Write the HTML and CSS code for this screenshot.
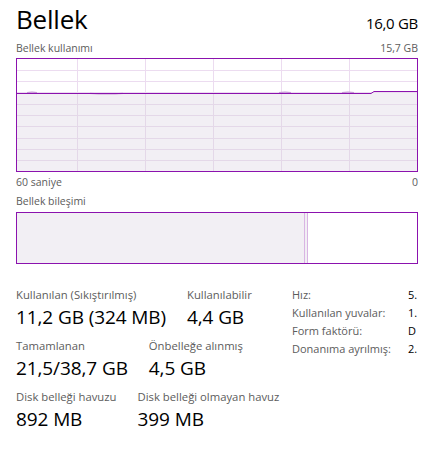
FILE: index.html
```html
<!DOCTYPE html>
<html lang="tr">
<head>
<meta charset="utf-8">
<link rel="stylesheet" href="styles.css">
</head>
<body>
<div class="page">
  <div class="head">
    <div class="title">Bellek</div>
    <div class="total">16,0 GB</div>
  </div>
  <div class="sub">
    <span>Bellek kullanımı</span>
    <span>15,7 GB</span>
  </div>
  <div class="graph">
    <svg width="400" height="112" viewBox="0 0 400 112">
      <g class="grid-v">
        <line x1="60.5" y1="0" x2="60.5" y2="112"/>
        <line x1="128.5" y1="0" x2="128.5" y2="112"/>
        <line x1="196.5" y1="0" x2="196.5" y2="112"/>
        <line x1="264.5" y1="0" x2="264.5" y2="112"/>
        <line x1="332.5" y1="0" x2="332.5" y2="112"/>
      </g>
      <g class="grid-h">
        <line x1="0" y1="11.5" x2="400" y2="11.5"/>
        <line x1="0" y1="22.5" x2="400" y2="22.5"/>
        <line x1="0" y1="33.5" x2="400" y2="33.5"/>
      </g>
      <path class="area" d="M0 34 L400 34 L400 112 L0 112 Z"/>
      <g class="grid-v2">
        <line x1="60.5" y1="34" x2="60.5" y2="112"/>
        <line x1="128.5" y1="34" x2="128.5" y2="112"/>
        <line x1="196.5" y1="34" x2="196.5" y2="112"/>
        <line x1="264.5" y1="34" x2="264.5" y2="112"/>
        <line x1="332.5" y1="34" x2="332.5" y2="112"/>
      </g>
      <g class="grid-h2">
        <line x1="0" y1="45.5" x2="400" y2="45.5"/>
        <line x1="0" y1="56.5" x2="400" y2="56.5"/>
        <line x1="0" y1="67.5" x2="400" y2="67.5"/>
        <line x1="0" y1="79.5" x2="400" y2="79.5"/>
        <line x1="0" y1="90.5" x2="400" y2="90.5"/>
        <line x1="0" y1="101.5" x2="400" y2="101.5"/>
      </g>
      <path class="bump" d="M10 33.6 Q15 32.6 20 33.6 M73 34.4 Q90 35.6 106 34.4 M262 33.6 Q268 32.6 274 33.6 M325 33.6 Q331 32.6 337 33.6"/>
      <path class="line" d="M0 34.5 L354 34.5 L357 32.5 L400 32.5"/>
    </svg>
  </div>
  <div class="axis">
    <span>60 saniye</span>
    <span>0</span>
  </div>
  <div class="sub sub2"><span>Bellek bileşimi</span></div>
  <div class="comp">
    <div class="used"></div>
    <div class="mod"></div>
    <div class="free"></div>
  </div>
  <div class="stats">
    <div class="left">
      <div class="row">
        <div class="stat"><div class="lbl">Kullanılan (Sıkıştırılmış)</div><div class="val">11,2 GB (324 MB)</div></div>
        <div class="stat"><div class="lbl">Kullanılabilir</div><div class="val">4,4 GB</div></div>
      </div>
      <div class="row">
        <div class="stat"><div class="lbl">Tamamlanan</div><div class="val">21,5/38,7 GB</div></div>
        <div class="stat"><div class="lbl">Önbelleğe alınmış</div><div class="val">4,5 GB</div></div>
      </div>
      <div class="row">
        <div class="stat"><div class="lbl">Disk belleği havuzu</div><div class="val">892 MB</div></div>
        <div class="stat"><div class="lbl">Disk belleği olmayan havuz</div><div class="val">399 MB</div></div>
      </div>
    </div>
    <div class="right">
      <div class="kv"><span class="k">Hız:</span><span class="v">5.</span></div>
      <div class="kv"><span class="k">Kullanılan yuvalar:</span><span class="v">1.</span></div>
      <div class="kv"><span class="k">Form faktörü:</span><span class="v">D</span></div>
      <div class="kv"><span class="k">Donanıma ayrılmış:</span><span class="v">2.</span></div>
    </div>
  </div>
</div>
</body>
</html>
```
FILE: styles.css
```css
html, body {
  margin: 0;
  padding: 0;
  background: #ffffff;
}
body {
  font-family: "Open Sans", "Noto Sans", "Liberation Sans", sans-serif;
  color: #000;
  overflow: hidden;
}
.page {
  width: 402px;
  padding: 0 0 0 16px;
  display: flex;
  flex-direction: column;
}
.head {
  display: flex;
  justify-content: space-between;
  align-items: baseline;
  height: 40px;
}
.title {
  font-size: 26px;
  line-height: 38px;
  letter-spacing: -0.2px;
}
.total {
  font-size: 15px;
  letter-spacing: -0.3px;
}
.sub {
  display: flex;
  justify-content: space-between;
  font-size: 10.5px;
  line-height: 17px;
  color: #5c5c5c;
  height: 18px;
}
.graph {
  border: 1px solid #8b12ae;
  width: 400px;
  height: 112px;
  display: flex;
}
.graph svg { display: block; }
.grid-v line, .grid-h line { stroke: #ecdcf0; stroke-width: 1; }
.grid-v2 line, .grid-h2 line { stroke: #e4d8e8; stroke-width: 1; }
.area { fill: #f2eff4; }
.line { fill: none; stroke: #8b12ae; stroke-width: 1; }
.bump { fill: none; stroke: #c597d4; stroke-width: 1.2; }
.axis {
  display: flex;
  justify-content: space-between;
  font-size: 10.5px;
  line-height: 20px;
  color: #5c5c5c;
  height: 20px;
}
.sub2 { height: 20px; line-height: 18px; }
.comp {
  border: 1px solid #8b12ae;
  width: 400px;
  height: 50px;
  display: flex;
}
.used { width: 287px; background: #f2eff4; }
.mod {
  width: 2px;
  background: #f2eff4;
  border-left: 1px solid #d9b5e3;
  border-right: 1px solid #d9b5e3;
}
.free { flex: 1; background: #fff; }
.stats {
  display: flex;
  margin-top: 23px;
}
.left {
  width: 276px;
  display: flex;
  flex-direction: column;
  gap: 7px;
}
.row {
  display: flex;
  gap: 21px;
}
.stat { display: flex; flex-direction: column; }
.lbl {
  font-size: 11.3px;
  line-height: 16px;
  color: #5c5c5c;
  white-space: nowrap;
}
.val {
  font-size: 19px;
  line-height: 28px;
  white-space: nowrap;
  letter-spacing: -0.1px;
}
.right {
  display: flex;
  flex-direction: column;
  margin-top: -1px;
}
.kv {
  display: flex;
  font-size: 11px;
  line-height: 18px;
  white-space: nowrap;
}
.k { width: 116px; color: #5c5c5c; }
.v { color: #000; }
```
